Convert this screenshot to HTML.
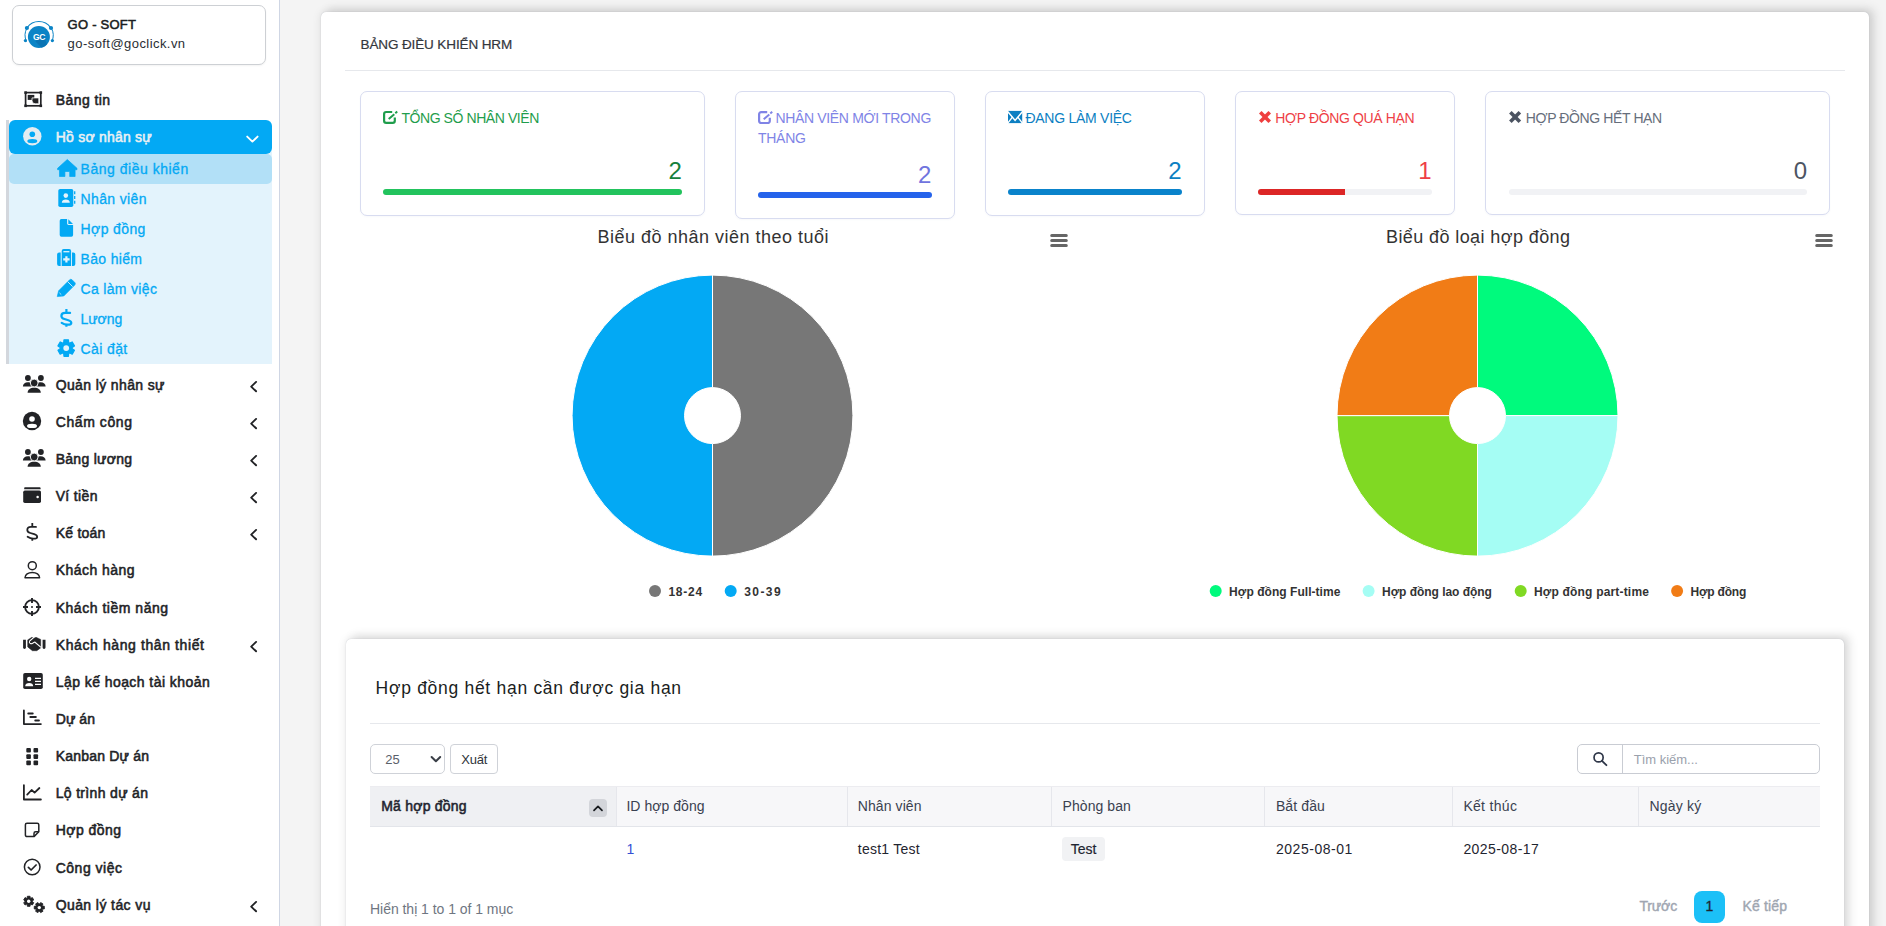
<!DOCTYPE html><html><head><meta charset="utf-8"><title>HRM</title><style>
html,body{margin:0;padding:0}
html,body{width:1886px;height:926px;overflow:hidden;background:#f4f4f4}
#root{position:relative;width:1886px;height:926px;overflow:hidden;background:#f4f4f4;font-family:"Liberation Sans", sans-serif}
.t{position:absolute;white-space:pre;line-height:20px;font-family:"Liberation Sans", sans-serif}
.a{position:absolute;box-sizing:border-box}
.i{position:absolute;overflow:visible}
</style></head><body><div id="root">
<div class="a" style="left:0;top:0;width:280px;height:926px;background:#fff;border-right:1px solid #cfd6e4"></div>
<div class="a" style="left:12px;top:5px;width:254px;height:60px;border:1px solid #cdd0d4;border-radius:7px;background:#fff;box-shadow:0 1px 2px rgba(0,0,0,.05)"></div>
<svg class="i" style="left:0px;top:0px" width="280" height="70" viewBox="0 0 280 70"><circle cx="38.9" cy="37" r="11" fill="#0b84c6"/><path d="M35.5 41.5L42.5 34.5L47.2 44.2A11 11 0 0 1 41.5 47.7Z" fill="#0a6fad" opacity=".75"/><path d="M26.5 41.5a14.6 14.6 0 0 1 0.6-13.6M51.2 27.9a14.6 14.6 0 0 1 .6 13.6" fill="none" stroke="#0b84c6" stroke-width="1"/><path d="M27.2 27.6a14.2 14.2 0 0 1 23.4 0" fill="none" stroke="#0b84c6" stroke-width="1.1"/><circle cx="26.9" cy="28" r="2.1" fill="#0b84c6"/><circle cx="51" cy="28" r="2.1" fill="#0b84c6"/><circle cx="25.4" cy="40.6" r="1.6" fill="#0b84c6"/><circle cx="52.4" cy="40.6" r="1.6" fill="#0b84c6"/><text x="38.9" y="40.2" font-family="Liberation Sans" font-weight="700" font-size="8.6" fill="#fff" text-anchor="middle" letter-spacing="-.5">GC</text></svg>
<span class="t" style="left:67.60px;top:15.00px;font-size:13px;font-weight:400;color:#1b1e22;letter-spacing:0.243px;-webkit-text-stroke:0.55px #1b1e22;">GO - SOFT</span>
<span class="t" style="left:67.60px;top:33.50px;font-size:13px;font-weight:400;color:#2a2e33;letter-spacing:0.439px;">go-soft@goclick.vn</span>
<div class="a" style="left:6px;top:120px;width:3px;height:244px;background:#d3d7dd"></div>
<div class="a" style="left:9px;top:150px;width:263px;height:214px;background:#e3f3fc"></div>
<div class="a" style="left:9px;top:154px;width:263px;height:30px;background:#b2e0f7;border-radius:5px"></div>
<div class="a" style="left:9px;top:120px;width:263px;height:34px;background:#03a9f4;border-radius:6px"></div>
<svg class="i" style="left:0px;top:0px" width="280" height="926" viewBox="0 0 280 926"><rect x="25.6" y="92.6" width="15.2" height="13.2" fill="none" stroke="#222326" stroke-width="1.7"/><rect x="24.3" y="91.3" width="2.6" height="2.6" fill="#222326"/><rect x="39.5" y="91.3" width="2.6" height="2.6" fill="#222326"/><rect x="24.3" y="104.5" width="2.6" height="2.6" fill="#222326"/><rect x="39.5" y="104.5" width="2.6" height="2.6" fill="#222326"/><rect x="27.7" y="94.9" width="6.6" height="5" fill="#222326"/><path d="M32 97.9h6.8v5.9h-3.6a3.2 3.2 0 0 1-3.2-3.2z" fill="#222326" stroke="#fff" stroke-width="0.8"/><circle cx="32.3" cy="136.2" r="9.2" fill="#e3ecf1"/><circle cx="32.3" cy="134.2" r="2.8" fill="#03a9f4"/><ellipse cx="32.3" cy="141.1" rx="5" ry="2.2" fill="#03a9f4"/><circle cx="27.900000000000002" cy="378" r="2.9" fill="#222326"/><circle cx="40.900000000000006" cy="378" r="2.9" fill="#222326"/><path d="M22.900000000000002 386.6c0-2.6 2-4.4 5-4.4 1.4 0 2.6 .4 3.4 1.1v3.3z" fill="#222326"/><path d="M45.6 386.6c0-2.6-2-4.4-5-4.4-1.4 0-2.6 .4-3.4 1.1v3.3z" fill="#222326"/><circle cx="34.2" cy="383" r="3.9" fill="#222326" stroke="#fff" stroke-width="0.9"/><path d="M27.6 392.8c0-3 2.6-5 6.6-5s6.6 2 6.6 5z" fill="#222326"/><circle cx="32" cy="421" r="9.2" fill="#222326"/><circle cx="32" cy="419.0" r="2.8" fill="#fff"/><ellipse cx="32" cy="425.9" rx="5" ry="2.2" fill="#fff"/><circle cx="27.900000000000002" cy="452" r="2.9" fill="#222326"/><circle cx="40.900000000000006" cy="452" r="2.9" fill="#222326"/><path d="M22.900000000000002 460.6c0-2.6 2-4.4 5-4.4 1.4 0 2.6 .4 3.4 1.1v3.3z" fill="#222326"/><path d="M45.6 460.6c0-2.6-2-4.4-5-4.4-1.4 0-2.6 .4-3.4 1.1v3.3z" fill="#222326"/><circle cx="34.2" cy="457" r="3.9" fill="#222326" stroke="#fff" stroke-width="0.9"/><path d="M27.6 466.8c0-3 2.6-5 6.6-5s6.6 2 6.6 5z" fill="#222326"/><path d="M25 487.2h14.6a1 1 0 0 1 1 1v1H24.2v-1.2a.8.8 0 0 1 .8-.8z" fill="#222326"/><rect x="23.2" y="490.6" width="17.8" height="12.3" rx="1.6" fill="#222326"/><circle cx="37.6" cy="497" r="1.25" fill="#fff"/><g transform="translate(32.3 532) scale(1.0)"><path d="M3.7 -5.1H-1.4C-3.7 -5.1 -5 -3.8 -5 -2.1C-5 -.5 -3.9 .4 -2 1L1.9 2.2C3.8 2.8 4.9 3.7 4.9 4.9C4.9 6.2 3.4 6.7 1 6.7C-1.4 6.7 -3.2 5.9 -4.7 4.8" fill="none" stroke="#222326" stroke-width="1.8" stroke-linecap="round" stroke-linejoin="round"/><path d="M0 -8.9V-5.1M0 6.7V8.8" stroke="#222326" stroke-width="1.8" stroke-linecap="butt"/></g><circle cx="32.3" cy="565.7" r="4" fill="none" stroke="#222326" stroke-width="1.5"/><path d="M25 577.8c0-3.2 3.2-5.4 7.3-5.4s7.3 2.2 7.3 5.4z" fill="none" stroke="#222326" stroke-width="1.5" stroke-linejoin="round"/><circle cx="32" cy="607" r="6.9" fill="none" stroke="#222326" stroke-width="1.8"/><path d="M32 598v5M32 611v5M23 607h5M36 607h5" stroke="#222326" stroke-width="1.9"/><circle cx="32" cy="607" r="1" fill="#222326"/><path d="M23.1 639.8h2.8v7.8a1.4 1.4 0 0 1-2.8 0z" fill="#222326"/><path d="M42.6 639.8h2.9v7.8a1.45 1.45 0 0 1-2.9 0z" fill="#222326"/><path d="M31.9 637.3L27.7 639.9V646.9L32.4 650.7H36.8L40.7 647.9V639.4L36 637.3L33.9 638.3Z" fill="#222326" stroke="#222326" stroke-width=".5" stroke-linejoin="round"/><path d="M33.9 637.3L29.7 641Q28.8 642.6 30.3 643.6Q31.4 644.1 32.6 643.3L34.7 642L41 647.3" fill="none" stroke="#fff" stroke-width="1.05" stroke-linejoin="round"/><path d="M31.2 642.1L35.7 639.5" stroke="#222326" stroke-width="1.7" stroke-linecap="round"/><rect x="23.2" y="673" width="19.6" height="16" rx="1.8" fill="#222326"/><circle cx="29.2" cy="679" r="2.2" fill="#fff"/><path d="M25.2 686.2c0-2 1.7-3.2 4-3.2s4 1.2 4 3.2z" fill="#fff"/><path d="M35 678.3h6M35 681.4h6M35 684.3h6" stroke="#fff" stroke-width="1.3"/><path d="M23.9 710.4v13.7h17" fill="none" stroke="#222326" stroke-width="1.8" stroke-linecap="round" stroke-linejoin="round"/><path d="M28.2 713.5h4.6M30.3 717h5.6M35.2 720.5h3.8" stroke="#222326" stroke-width="1.8" stroke-linecap="round"/><rect x="26.3" y="748" width="4.6" height="4.6" rx="1" fill="#222326"/><rect x="26.3" y="754.3" width="4.6" height="4.6" rx="1" fill="#222326"/><rect x="26.3" y="760.6" width="4.6" height="4.6" rx="1" fill="#222326"/><rect x="33.5" y="748" width="4.6" height="4.6" rx="1" fill="#222326"/><rect x="33.5" y="754.3" width="4.6" height="4.6" rx="1" fill="#222326"/><rect x="33.5" y="760.6" width="4.6" height="4.6" rx="1" fill="#222326"/><path d="M23.9 785.2v14.3h17" fill="none" stroke="#222326" stroke-width="1.8" stroke-linecap="round" stroke-linejoin="round"/><path d="M27.2 794.6l4.4-4.6 3 2.6 4.8-4.6" fill="none" stroke="#222326" stroke-width="1.8" stroke-linecap="round" stroke-linejoin="round"/><path d="M27 823.2h10.2a1.6 1.6 0 0 1 1.6 1.6v7l-4.8 4.8H27a1.6 1.6 0 0 1-1.6-1.6v-10.2a1.6 1.6 0 0 1 1.6-1.6z" fill="none" stroke="#222326" stroke-width="1.5" stroke-linejoin="round"/><path d="M38.6 831.8h-3a1.6 1.6 0 0 0-1.6 1.6v3" fill="none" stroke="#222326" stroke-width="1.5"/><circle cx="32.2" cy="867" r="7.8" fill="none" stroke="#222326" stroke-width="1.5"/><path d="M28.4 867.4l2.7 2.6 5-5" fill="none" stroke="#222326" stroke-width="1.7" stroke-linecap="round" stroke-linejoin="round"/><polygon points="27.35,896.28 30.05,896.28 30.20,897.92 30.87,898.31 32.38,897.62 33.72,899.95 32.38,900.91 32.38,901.69 33.72,902.65 32.38,904.98 30.87,904.29 30.20,904.68 30.05,906.32 27.35,906.32 27.20,904.68 26.53,904.29 25.02,904.98 23.68,902.65 25.02,901.69 25.02,900.91 23.68,899.95 25.02,897.62 26.53,898.31 27.20,897.92" fill="#222326" stroke="#222326" stroke-width="0.9" stroke-linejoin="round"/><circle cx="28.7" cy="901.3" r="1.7" fill="#fff"/><polygon points="44.32,906.25 44.32,908.95 42.68,909.10 42.29,909.77 42.98,911.28 40.65,912.62 39.69,911.28 38.91,911.28 37.95,912.62 35.62,911.28 36.31,909.77 35.92,909.10 34.28,908.95 34.28,906.25 35.92,906.10 36.31,905.43 35.62,903.92 37.95,902.58 38.91,903.92 39.69,903.92 40.65,902.58 42.98,903.92 42.29,905.43 42.68,906.10" fill="#222326" stroke="#222326" stroke-width="0.9" stroke-linejoin="round"/><circle cx="39.3" cy="907.6" r="1.7" fill="#fff"/><path d="M67.3 159.5l9.7 8.8v1.4h-1.9v6.8h-5.4v-5h-4.8v5h-5.4v-6.8h-1.9v-1.4z" fill="#03a9f4" stroke="#03a9f4" stroke-width=".7" stroke-linejoin="round"/><rect x="58.3" y="189" width="15" height="18" rx="1.8" fill="#03a9f4"/><circle cx="65.8" cy="195.6" r="2.3" fill="#e6f4fc"/><path d="M61.8 202.8c0-2 1.7-3.2 4-3.2s4 1.2 4 3.2z" fill="#e6f4fc"/><path d="M74.7 191.2v3M74.7 196v3M74.7 200.8v3" stroke="#03a9f4" stroke-width="1.3"/><path d="M61.4 219h5.7v4.6a1.4 1.4 0 0 0 1.4 1.4h4.6v10a1.7 1.7 0 0 1-1.7 1.7h-10a1.7 1.7 0 0 1-1.7-1.7v-14.3a1.7 1.7 0 0 1 1.7-1.7z" fill="#03a9f4"/><path d="M68.3 219.2l4.7 4.7h-4.7z" fill="#03a9f4"/><path d="M60.7 252.4v13.6h-1.6a2 2 0 0 1-2-2v-9.6a2 2 0 0 1 2-2z" fill="#03a9f4"/><path d="M72 252.4v13.6h1.3a2 2 0 0 0 2-2v-9.6a2 2 0 0 0-2-2z" fill="#03a9f4"/><path d="M61.7 266v-15.1a2 2 0 0 1 2-2h5.4a2 2 0 0 1 2 2v15.1z" fill="#03a9f4"/><path d="M63.4 251.7h6" stroke="#e3f3fc" stroke-width="1.3"/><path d="M66.4 256.2v6.4M63.2 259.4h6.4" stroke="#e3f3fc" stroke-width="2.2"/><path d="M57.2 296.6l1.4-5.8 11-11a1.8 1.8 0 0 1 2.5 0l2.7 2.7a1.8 1.8 0 0 1 0 2.5l-11 11z" fill="#03a9f4" stroke="#03a9f4" stroke-width=".6" stroke-linejoin="round"/><path d="M67.6 281.6l5 5" stroke="#e3f3fc" stroke-width=".9"/><path d="M59.4 292.8l1.9 1.9" stroke="#e3f3fc" stroke-width=".8"/><g transform="translate(66.4 318) scale(1.0)"><path d="M3.7 -5.1H-1.4C-3.7 -5.1 -5 -3.8 -5 -2.1C-5 -.5 -3.9 .4 -2 1L1.9 2.2C3.8 2.8 4.9 3.7 4.9 4.9C4.9 6.2 3.4 6.7 1 6.7C-1.4 6.7 -3.2 5.9 -4.7 4.8" fill="none" stroke="#03a9f4" stroke-width="2.2" stroke-linecap="round" stroke-linejoin="round"/><path d="M0 -8.9V-5.1M0 6.7V8.8" stroke="#03a9f4" stroke-width="2.2" stroke-linecap="butt"/></g><polygon points="64.00,339.84 68.40,339.84 68.64,342.57 69.73,343.20 72.21,342.04 74.41,345.85 72.17,347.42 72.17,348.68 74.41,350.25 72.21,354.06 69.73,352.90 68.64,353.53 68.40,356.26 64.00,356.26 63.76,353.53 62.67,352.90 60.19,354.06 57.99,350.25 60.23,348.68 60.23,347.42 57.99,345.85 60.19,342.04 62.67,343.20 63.76,342.57" fill="#03a9f4" stroke="#03a9f4" stroke-width="1.3" stroke-linejoin="round"/><circle cx="66.2" cy="348.05" r="2.9" fill="#e3f3fc"/></svg>
<span class="t" style="left:55.70px;top:89.95px;font-size:14px;font-weight:400;color:#222326;letter-spacing:0.432px;-webkit-text-stroke:0.55px #222326;">Bảng tin</span>
<span class="t" style="left:55.70px;top:126.85px;font-size:14px;font-weight:400;color:#eaf0f3;letter-spacing:0.228px;-webkit-text-stroke:0.55px #eaf0f3;">Hồ sơ nhân sự</span>
<svg class="i" style="left:0px;top:0px" width="280" height="926" viewBox="0 0 280 926"><path d="M247.2 136.6l5.2 5 5.2-5" fill="none" stroke="#fff" stroke-width="1.9" stroke-linecap="round" stroke-linejoin="round"/></svg>
<span class="t" style="left:80.60px;top:158.85px;font-size:14px;font-weight:400;color:#03a9f4;letter-spacing:0.513px;-webkit-text-stroke:0.3px #03a9f4;">Bảng điều khiển</span>
<span class="t" style="left:80.60px;top:188.85px;font-size:14px;font-weight:400;color:#03a9f4;letter-spacing:0.357px;-webkit-text-stroke:0.3px #03a9f4;">Nhân viên</span>
<span class="t" style="left:80.60px;top:218.85px;font-size:14px;font-weight:400;color:#03a9f4;letter-spacing:0.382px;-webkit-text-stroke:0.3px #03a9f4;">Hợp đồng</span>
<span class="t" style="left:80.60px;top:248.85px;font-size:14px;font-weight:400;color:#03a9f4;letter-spacing:0.321px;-webkit-text-stroke:0.3px #03a9f4;">Bảo hiểm</span>
<span class="t" style="left:80.60px;top:278.85px;font-size:14px;font-weight:400;color:#03a9f4;letter-spacing:0.316px;-webkit-text-stroke:0.3px #03a9f4;">Ca làm việc</span>
<span class="t" style="left:80.60px;top:308.85px;font-size:14px;font-weight:400;color:#03a9f4;letter-spacing:-0.080px;-webkit-text-stroke:0.3px #03a9f4;">Lương</span>
<span class="t" style="left:80.60px;top:338.85px;font-size:14px;font-weight:400;color:#03a9f4;letter-spacing:0.373px;-webkit-text-stroke:0.3px #03a9f4;">Cài đặt</span>
<span class="t" style="left:55.70px;top:374.65px;font-size:14px;font-weight:400;color:#222326;letter-spacing:0.375px;-webkit-text-stroke:0.55px #222326;">Quản lý nhân sự</span>
<span class="t" style="left:55.70px;top:411.79px;font-size:14px;font-weight:400;color:#222326;letter-spacing:0.588px;-webkit-text-stroke:0.55px #222326;">Chấm công</span>
<span class="t" style="left:55.70px;top:448.94px;font-size:14px;font-weight:400;color:#222326;letter-spacing:0.275px;-webkit-text-stroke:0.55px #222326;">Bảng lương</span>
<span class="t" style="left:55.70px;top:486.08px;font-size:14px;font-weight:400;color:#222326;letter-spacing:0.349px;-webkit-text-stroke:0.55px #222326;">Ví tiền</span>
<span class="t" style="left:55.70px;top:523.22px;font-size:14px;font-weight:400;color:#222326;letter-spacing:0.239px;-webkit-text-stroke:0.55px #222326;">Kế toán</span>
<span class="t" style="left:55.70px;top:560.36px;font-size:14px;font-weight:400;color:#222326;letter-spacing:0.463px;-webkit-text-stroke:0.55px #222326;">Khách hàng</span>
<span class="t" style="left:55.70px;top:597.51px;font-size:14px;font-weight:400;color:#222326;letter-spacing:0.523px;-webkit-text-stroke:0.55px #222326;">Khách tiềm năng</span>
<span class="t" style="left:55.70px;top:634.65px;font-size:14px;font-weight:400;color:#222326;letter-spacing:0.603px;-webkit-text-stroke:0.55px #222326;">Khách hàng thân thiết</span>
<span class="t" style="left:55.70px;top:671.79px;font-size:14px;font-weight:400;color:#222326;letter-spacing:0.439px;-webkit-text-stroke:0.55px #222326;">Lập kế hoạch tài khoản</span>
<span class="t" style="left:55.70px;top:708.94px;font-size:14px;font-weight:400;color:#222326;letter-spacing:0.087px;-webkit-text-stroke:0.55px #222326;">Dự án</span>
<span class="t" style="left:55.70px;top:746.08px;font-size:14px;font-weight:400;color:#222326;letter-spacing:0.199px;-webkit-text-stroke:0.55px #222326;">Kanban Dự án</span>
<span class="t" style="left:55.70px;top:783.22px;font-size:14px;font-weight:400;color:#222326;letter-spacing:0.331px;-webkit-text-stroke:0.55px #222326;">Lộ trình dự án</span>
<span class="t" style="left:55.70px;top:820.37px;font-size:14px;font-weight:400;color:#222326;letter-spacing:0.454px;-webkit-text-stroke:0.55px #222326;">Hợp đồng</span>
<span class="t" style="left:55.70px;top:857.51px;font-size:14px;font-weight:400;color:#222326;letter-spacing:0.504px;-webkit-text-stroke:0.55px #222326;">Công việc</span>
<span class="t" style="left:55.70px;top:894.65px;font-size:14px;font-weight:400;color:#222326;letter-spacing:0.408px;-webkit-text-stroke:0.55px #222326;">Quản lý tác vụ</span>
<svg class="i" style="left:0px;top:0px" width="280" height="926" viewBox="0 0 280 926"><path d="M256.1 381.9l-4.9 4.7 4.9 4.7" fill="none" stroke="#222326" stroke-width="1.9" stroke-linecap="round" stroke-linejoin="round"/><path d="M256.1 418.9l-4.9 4.7 4.9 4.7" fill="none" stroke="#222326" stroke-width="1.9" stroke-linecap="round" stroke-linejoin="round"/><path d="M256.1 455.9l-4.9 4.7 4.9 4.7" fill="none" stroke="#222326" stroke-width="1.9" stroke-linecap="round" stroke-linejoin="round"/><path d="M256.1 492.9l-4.9 4.7 4.9 4.7" fill="none" stroke="#222326" stroke-width="1.9" stroke-linecap="round" stroke-linejoin="round"/><path d="M256.1 529.9l-4.9 4.7 4.9 4.7" fill="none" stroke="#222326" stroke-width="1.9" stroke-linecap="round" stroke-linejoin="round"/><path d="M256.1 641.9l-4.9 4.7 4.9 4.7" fill="none" stroke="#222326" stroke-width="1.9" stroke-linecap="round" stroke-linejoin="round"/><path d="M256.1 901.9l-4.9 4.7 4.9 4.7" fill="none" stroke="#222326" stroke-width="1.9" stroke-linecap="round" stroke-linejoin="round"/></svg>
<div class="a" style="left:321px;top:12px;width:1548px;height:960px;background:#fff;border-radius:5px;box-shadow:0 0 1px rgba(90,100,120,.35),0 0 10px rgba(0,0,0,.1),6px -4px 10px rgba(0,0,0,.1)"></div>
<span class="t" style="left:360.50px;top:35.12px;font-size:13.5px;font-weight:400;color:#33373d;letter-spacing:-0.116px;-webkit-text-stroke:.2px #33373d;">BẢNG ĐIỀU KHIỂN HRM</span>
<div class="a" style="left:345px;top:70px;width:1500px;height:1px;background:#e6e8ec"></div>
<div class="a" style="left:360px;top:91px;width:345px;height:124.5px;border:1px solid #d8dcf0;border-radius:7px;background:#fff;box-shadow:0 1px 2px rgba(80,90,160,.04)"></div>
<div class="a" style="left:735px;top:91px;width:220px;height:127.5px;border:1px solid #d8dcf0;border-radius:7px;background:#fff;box-shadow:0 1px 2px rgba(80,90,160,.04)"></div>
<div class="a" style="left:985px;top:91px;width:220px;height:124.5px;border:1px solid #d8dcf0;border-radius:7px;background:#fff;box-shadow:0 1px 2px rgba(80,90,160,.04)"></div>
<div class="a" style="left:1235px;top:91px;width:220px;height:124px;border:1px solid #d8dcf0;border-radius:7px;background:#fff;box-shadow:0 1px 2px rgba(80,90,160,.04)"></div>
<div class="a" style="left:1485px;top:91px;width:345px;height:124px;border:1px solid #d8dcf0;border-radius:7px;background:#fff;box-shadow:0 1px 2px rgba(80,90,160,.04)"></div>
<span class="t" style="left:401.40px;top:107.95px;font-size:14px;font-weight:400;color:#1f9d4c;letter-spacing:-0.424px;">TỔNG SỐ NHÂN VIÊN</span>
<span class="t" style="left:668.44px;top:160.68px;font-size:24px;font-weight:400;color:#16803c;letter-spacing:0.000px;">2</span>
<div class="a" style="left:383px;top:189px;width:299px;height:6px;border-radius:3px;background:#22c35d"></div>
<span class="t" style="left:775.40px;top:108.15px;font-size:14px;font-weight:400;color:#8084e6;letter-spacing:-0.332px;">NHÂN VIÊN MỚI TRONG</span>
<span class="t" style="left:758.00px;top:128.25px;font-size:14px;font-weight:400;color:#8084e6;letter-spacing:-0.275px;">THÁNG</span>
<span class="t" style="left:917.94px;top:164.68px;font-size:24px;font-weight:400;color:#7074de;letter-spacing:0.000px;">2</span>
<div class="a" style="left:758px;top:192px;width:174px;height:6px;border-radius:3px;background:#2563eb"></div>
<span class="t" style="left:1025.40px;top:107.95px;font-size:14px;font-weight:400;color:#0c7fc2;letter-spacing:-0.259px;">ĐANG LÀM VIỆC</span>
<span class="t" style="left:1168.24px;top:160.68px;font-size:24px;font-weight:400;color:#0c7fc2;letter-spacing:0.000px;">2</span>
<div class="a" style="left:1008px;top:189px;width:174px;height:6px;border-radius:3px;background:#0a83cb"></div>
<span class="t" style="left:1275.30px;top:107.95px;font-size:14px;font-weight:400;color:#ee3f46;letter-spacing:-0.358px;">HỢP ĐỒNG QUÁ HẠN</span>
<span class="t" style="left:1418.24px;top:160.68px;font-size:24px;font-weight:400;color:#ee3f46;letter-spacing:0.000px;">1</span>
<div class="a" style="left:1258px;top:189px;width:174px;height:6px;border-radius:3px;background:#f1f2f5"></div>
<div class="a" style="left:1258px;top:189px;width:87px;height:6px;border-radius:3px 0 0 3px;background:#dc2626"></div>
<span class="t" style="left:1525.80px;top:107.95px;font-size:14px;font-weight:400;color:#666e7b;letter-spacing:-0.386px;">HỢP ĐỒNG HẾT HẠN</span>
<span class="t" style="left:1793.64px;top:160.68px;font-size:24px;font-weight:400;color:#4d5563;letter-spacing:0.000px;">0</span>
<div class="a" style="left:1508.5px;top:189px;width:298.5px;height:6px;border-radius:3px;background:#f1f2f5"></div>
<svg class="i" style="left:0px;top:0px" width="1886" height="300" viewBox="0 0 1886 300"><path d="M392.2 112.0H386.2A2.1 2.1 0 0 0 384.1 114.10000000000001V120.7A2.1 2.1 0 0 0 386.2 122.80000000000001H392.7A2.1 2.1 0 0 0 394.8 120.7V117.5" fill="none" stroke="#1f9d4c" stroke-width="2.2"/><path d="M388.7 119.0L394.3 114.2M395.3 113.30000000000001L397.2 111.60000000000001" stroke="#1f9d4c" stroke-width="2"/><path d="M767.2 112.19999999999999H761.2A2.1 2.1 0 0 0 759.1 114.3V120.89999999999999A2.1 2.1 0 0 0 761.2 123.0H767.7A2.1 2.1 0 0 0 769.8 120.89999999999999V117.69999999999999" fill="none" stroke="#8084e6" stroke-width="2.2"/><path d="M763.7 119.19999999999999L769.3 114.39999999999999M770.3 113.5L772.2 111.8" stroke="#8084e6" stroke-width="2"/><rect x="1008" y="110.9" width="14.2" height="12.2" fill="#0c7fc2"/><path d="M1006.6 110.2L1015.1 120.4L1023.6 110.2" fill="none" stroke="#fff" stroke-width="1.5"/><path d="M1007.2 123.9L1012.6 116.8M1023 123.9L1017.6 116.8" fill="none" stroke="#fff" stroke-width="1.4"/><path d="M1008 111v2.6M1022.2 111v2.6M1008 120.4v2.6M1022.2 120.4v2.6" stroke="#fff" stroke-width="1.6" opacity=".0"/><g transform="rotate(45 1265 117)"><rect x="1258.3" y="115.2" width="13.4" height="3.6" fill="#ef3e3e"/><rect x="1263.2" y="110.3" width="3.6" height="13.4" fill="#ef3e3e"/></g><g transform="rotate(45 1515.1 117)"><rect x="1508.3999999999999" y="115.2" width="13.4" height="3.6" fill="#4b5361"/><rect x="1513.3" y="110.3" width="3.6" height="13.4" fill="#4b5361"/></g></svg>
<span class="t" style="left:597.50px;top:226.66px;font-size:18px;font-weight:400;color:#333;letter-spacing:0.493px;">Biểu đồ nhân viên theo tuổi</span>
<span class="t" style="left:1386.00px;top:226.66px;font-size:18px;font-weight:400;color:#333;letter-spacing:0.402px;">Biểu đồ loại hợp đồng</span>
<svg class="i" style="left:0px;top:0px" width="1886" height="620" viewBox="0 0 1886 620"><path d="M1051.7 235.6h14.6M1051.7 240.6h14.6M1051.7 245.6h14.6" stroke="#666" stroke-width="3" stroke-linecap="round"/><path d="M1816.7 235.6h14.6M1816.7 240.6h14.6M1816.7 245.6h14.6" stroke="#666" stroke-width="3" stroke-linecap="round"/><path d="M712.5 275.1A140.5 140.5 0 0 1 712.5 556.1L712.5 443.6A28 28 0 0 0 712.5 387.6Z" fill="#777777" stroke="#fff" stroke-width="1" stroke-linejoin="round"/><path d="M712.5 556.1A140.5 140.5 0 0 1 712.5 275.1L712.5 387.6A28 28 0 0 0 712.5 443.6Z" fill="#03a9f4" stroke="#fff" stroke-width="1" stroke-linejoin="round"/><path d="M1477.50 275.10A140.5 140.5 0 0 1 1618.00 415.60L1505.50 415.60A28 28 0 0 0 1477.50 387.60Z" fill="#00fa7d" stroke="#fff" stroke-width="1" stroke-linejoin="round"/><path d="M1618.00 415.60A140.5 140.5 0 0 1 1477.50 556.10L1477.50 443.60A28 28 0 0 0 1505.50 415.60Z" fill="#a5fdf4" stroke="#fff" stroke-width="1" stroke-linejoin="round"/><path d="M1477.50 556.10A140.5 140.5 0 0 1 1337.00 415.60L1449.50 415.60A28 28 0 0 0 1477.50 443.60Z" fill="#80d923" stroke="#fff" stroke-width="1" stroke-linejoin="round"/><path d="M1337.00 415.60A140.5 140.5 0 0 1 1477.50 275.10L1477.50 387.60A28 28 0 0 0 1449.50 415.60Z" fill="#f17c16" stroke="#fff" stroke-width="1" stroke-linejoin="round"/><circle cx="655" cy="591" r="6" fill="#777777"/><circle cx="730.7" cy="591" r="6" fill="#03a9f4"/><circle cx="1215.7" cy="591" r="6" fill="#00fa7d"/><circle cx="1368.6" cy="591" r="6" fill="#a5fdf4"/><circle cx="1520.7" cy="591" r="6" fill="#80d923"/><circle cx="1677.1" cy="591" r="6" fill="#f17c16"/></svg>
<span class="t" style="left:668.40px;top:581.64px;font-size:12px;font-weight:700;color:#333;letter-spacing:0.749px;">18-24</span>
<span class="t" style="left:744.30px;top:581.64px;font-size:12px;font-weight:700;color:#333;letter-spacing:1.399px;">30-39</span>
<span class="t" style="left:1229.10px;top:581.64px;font-size:12px;font-weight:700;color:#333;letter-spacing:0.046px;">Hợp đồng Full-time</span>
<span class="t" style="left:1382.00px;top:581.64px;font-size:12px;font-weight:700;color:#333;letter-spacing:-0.038px;">Hợp đồng lao động</span>
<span class="t" style="left:1534.00px;top:581.64px;font-size:12px;font-weight:700;color:#333;letter-spacing:0.179px;">Hợp đồng part-time</span>
<span class="t" style="left:1690.50px;top:581.64px;font-size:12px;font-weight:700;color:#333;letter-spacing:-0.198px;">Hợp đồng</span>
<div class="a" style="left:346px;top:639px;width:1498px;height:400px;background:#fff;border-radius:5px;box-shadow:0 0 1px rgba(90,100,120,.35),0 0 10px rgba(0,0,0,.1),6px -4px 10px rgba(0,0,0,.1)"></div>
<span class="t" style="left:375.60px;top:677.94px;font-size:17.5px;font-weight:400;color:#1a1d21;letter-spacing:0.710px;">Hợp đồng hết hạn cần được gia hạn</span>
<div class="a" style="left:370px;top:723px;width:1450px;height:1px;background:#e6e8ec"></div>
<div class="a" style="left:370px;top:744px;width:75px;height:30px;border:1px solid #cfd2d8;border-radius:5px;background:#fff"></div>
<span class="t" style="left:385.20px;top:749.70px;font-size:13px;font-weight:400;color:#5a6069;letter-spacing:0.131px;">25</span>
<div class="a" style="left:450px;top:744px;width:48px;height:30px;border:1px solid #cfd2d8;border-radius:4px;background:#fff"></div>
<span class="t" style="left:461.30px;top:749.70px;font-size:13px;font-weight:400;color:#2f343a;letter-spacing:-0.250px;">Xuất</span>
<div class="a" style="left:1577px;top:744px;width:243px;height:30px;border:1px solid #c9ccd3;border-radius:5px;background:#fff"></div>
<div class="a" style="left:1622px;top:744px;width:1px;height:30px;background:#c9ccd3"></div>
<span class="t" style="left:1633.80px;top:750.00px;font-size:13px;font-weight:400;color:#9aa1ac;letter-spacing:-0.018px;">Tìm kiếm...</span>
<div class="a" style="left:370px;top:786px;width:1450px;height:41px;background:#f7f7f9;border-top:1px solid #ececf0;border-bottom:1px solid #e3e5ea"></div>
<div class="a" style="left:370px;top:786px;width:246px;height:41px;background:#eff0f3;border-top:1px solid #ececf0;border-bottom:1px solid #e3e5ea"></div>
<div class="a" style="left:615.5px;top:787px;width:1px;height:39px;background:#e6e7ec"></div>
<div class="a" style="left:846.5px;top:787px;width:1px;height:39px;background:#e6e7ec"></div>
<div class="a" style="left:1051.3px;top:787px;width:1px;height:39px;background:#e6e7ec"></div>
<div class="a" style="left:1264.3px;top:787px;width:1px;height:39px;background:#e6e7ec"></div>
<div class="a" style="left:1452.2px;top:787px;width:1px;height:39px;background:#e6e7ec"></div>
<div class="a" style="left:1638.4px;top:787px;width:1px;height:39px;background:#e6e7ec"></div>
<span class="t" style="left:381.20px;top:796.45px;font-size:14px;font-weight:400;color:#1f2530;letter-spacing:0.228px;-webkit-text-stroke:0.55px #1f2530;">Mã hợp đồng</span>
<div class="a" style="left:589px;top:799px;width:18px;height:18px;border-radius:4px;background:#d3d5da"></div>
<span class="t" style="left:626.40px;top:796.25px;font-size:14px;font-weight:400;color:#3a4150;letter-spacing:0.051px;">ID hợp đồng</span>
<span class="t" style="left:857.80px;top:796.25px;font-size:14px;font-weight:400;color:#3a4150;letter-spacing:0.082px;">Nhân viên</span>
<span class="t" style="left:1062.50px;top:796.25px;font-size:14px;font-weight:400;color:#3a4150;letter-spacing:0.083px;">Phòng ban</span>
<span class="t" style="left:1275.90px;top:796.25px;font-size:14px;font-weight:400;color:#3a4150;letter-spacing:0.122px;">Bắt đầu</span>
<span class="t" style="left:1463.40px;top:796.25px;font-size:14px;font-weight:400;color:#3a4150;letter-spacing:0.304px;">Kết thúc</span>
<span class="t" style="left:1649.40px;top:796.25px;font-size:14px;font-weight:400;color:#3a4150;letter-spacing:0.220px;">Ngày ký</span>
<span class="t" style="left:626.40px;top:838.95px;font-size:14px;font-weight:400;color:#3550d4;letter-spacing:0.000px;">1</span>
<span class="t" style="left:857.80px;top:838.95px;font-size:14px;font-weight:400;color:#1f2530;letter-spacing:0.236px;">test1 Test</span>
<div class="a" style="left:1062px;top:837px;width:43px;height:23.5px;border-radius:4px;background:#f1f2f4"></div>
<span class="t" style="left:1070.70px;top:838.95px;font-size:14px;font-weight:400;color:#1f2530;letter-spacing:0.004px;-webkit-text-stroke:0.2px #1f2530;">Test</span>
<span class="t" style="left:1275.90px;top:838.95px;font-size:14px;font-weight:400;color:#1f2530;letter-spacing:0.542px;">2025-08-01</span>
<span class="t" style="left:1463.40px;top:838.95px;font-size:14px;font-weight:400;color:#1f2530;letter-spacing:0.408px;">2025-08-17</span>
<span class="t" style="left:370.00px;top:899.35px;font-size:14px;font-weight:400;color:#6f7682;letter-spacing:-0.033px;">Hiển thị 1 to 1 of 1 mục</span>
<span class="t" style="left:1639.40px;top:895.95px;font-size:14px;font-weight:400;color:#a0a6b1;letter-spacing:-0.113px;-webkit-text-stroke:0.4px #a0a6b1;">Trước</span>
<div class="a" style="left:1694px;top:891px;width:31px;height:32px;border-radius:8px;background:#1cc0f7"></div>
<span class="t" style="left:1705.60px;top:896.15px;font-size:14px;font-weight:400;color:#1f2530;letter-spacing:0.000px;-webkit-text-stroke:0.3px #1f2530;">1</span>
<span class="t" style="left:1742.50px;top:895.95px;font-size:14px;font-weight:400;color:#a0a6b1;letter-spacing:0.151px;-webkit-text-stroke:0.4px #a0a6b1;">Kế tiếp</span>
<svg class="i" style="left:0px;top:0px" width="1886" height="926" viewBox="0 0 1886 926"><path d="M431.6 757l4.3 4.2 4.3-4.2" fill="none" stroke="#3a3f47" stroke-width="2" stroke-linecap="round" stroke-linejoin="round"/><path d="M594 810.4l4-4 4 4" fill="none" stroke="#16191d" stroke-width="1.7" stroke-linecap="round" stroke-linejoin="round"/><circle cx="1598.6" cy="757.4" r="4.55" fill="none" stroke="#2e3648" stroke-width="1.7"/><path d="M1602 760.9l4.4 4.3" stroke="#2e3648" stroke-width="1.8" stroke-linecap="round"/></svg>
</div></body></html>
